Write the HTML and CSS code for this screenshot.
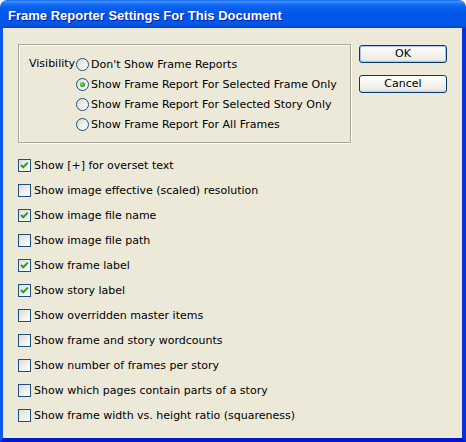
FILE: index.html
```html
<!DOCTYPE html>
<html>
<head>
<meta charset="utf-8">
<title>Frame Reporter Settings</title>
<link rel="stylesheet" href="styles.css">
</head>
<body>
<div class="window">
  <div class="titlebar"><span class="title">Frame Reporter Settings For This Document</span></div>
  <div class="client">
    <div class="top">
      <div class="group">
        <div class="vis-label">Visibility</div>
        <div class="radios">
          <div class="radio"><span class="rb"></span><span>Don't Show Frame Reports</span></div>
          <div class="radio"><span class="rb on"><span class="dot"></span></span><span>Show Frame Report For Selected Frame Only</span></div>
          <div class="radio"><span class="rb"></span><span>Show Frame Report For Selected Story Only</span></div>
          <div class="radio"><span class="rb"></span><span>Show Frame Report For All Frames</span></div>
        </div>
      </div>
      <div class="buttons">
        <div class="btn default">OK</div>
        <div class="btn">Cancel</div>
      </div>
    </div>
    <div class="checks">
      <div class="check"><span class="cb"><svg width="11" height="11" viewBox="0 0 11 11"><polyline points="2,5 4.2,7.3 8.8,2.6" fill="none" stroke="#21A121" stroke-width="2"/></svg></span><span>Show [+] for overset text</span></div>
      <div class="check"><span class="cb"></span><span>Show image effective (scaled) resolution</span></div>
      <div class="check"><span class="cb"><svg width="11" height="11" viewBox="0 0 11 11"><polyline points="2,5 4.2,7.3 8.8,2.6" fill="none" stroke="#21A121" stroke-width="2"/></svg></span><span>Show image file name</span></div>
      <div class="check"><span class="cb"></span><span>Show image file path</span></div>
      <div class="check"><span class="cb"><svg width="11" height="11" viewBox="0 0 11 11"><polyline points="2,5 4.2,7.3 8.8,2.6" fill="none" stroke="#21A121" stroke-width="2"/></svg></span><span>Show frame label</span></div>
      <div class="check"><span class="cb"><svg width="11" height="11" viewBox="0 0 11 11"><polyline points="2,5 4.2,7.3 8.8,2.6" fill="none" stroke="#21A121" stroke-width="2"/></svg></span><span>Show story label</span></div>
      <div class="check"><span class="cb"></span><span>Show overridden master items</span></div>
      <div class="check"><span class="cb"></span><span>Show frame and story wordcounts</span></div>
      <div class="check"><span class="cb"></span><span>Show number of frames per story</span></div>
      <div class="check"><span class="cb"></span><span>Show which pages contain parts of a story</span></div>
      <div class="check"><span class="cb"></span><span>Show frame width vs. height ratio (squareness)</span></div>
    </div>
  </div>
</div>
</body>
</html>
```

FILE: styles.css
```css
html, body {
  margin: 0;
  padding: 0;
  background: #ffffff;
}

.window {
  width: 466px;
  height: 442px;
  display: flex;
  flex-direction: column;
  font-family: "DejaVu Sans", Tahoma, sans-serif;
  font-size: 11px;
  color: #000;
}

.titlebar {
  height: 28px;
  flex: none;
  border-radius: 7px 7px 0 0;
  background: linear-gradient(180deg, #0A5FE6 0%, #3D95FF 5%, #2A7DF8 10%, #0A62EE 22%, #0056E6 50%, #0058EC 78%, #0A54E0 90%, #0043C6 100%);
  display: flex;
  align-items: center;
  padding-left: 8px;
  box-sizing: border-box;
}

.title {
  font-family: "Liberation Sans", Arial, sans-serif;
  font-weight: bold;
  font-size: 13px;
  color: #ffffff;
  text-shadow: 1px 1px 0 #0A1E9C;
  margin-top: 2px;
}

.client {
  flex: 1;
  background: #ECE9D8;
  border-left: 3px solid #0A58EC;
  border-right: 4px solid #0831D9;
  border-bottom: 4px solid #0019CF;
  display: flex;
  flex-direction: column;
  padding: 16px 0 0 15px;
}

.top {
  display: flex;
  align-items: flex-start;
}

.group {
  width: 321px;
  height: 88px;
  border: 1px solid #ACA899;
  box-shadow: 1px 1px 0 #ffffff, inset 1px 1px 0 #ffffff;
  display: flex;
  align-items: flex-start;
  padding: 9px 0 0 10px;
  box-sizing: content-box;
}

.vis-label {
  width: 47px;
  height: 20px;
  line-height: 20px;
}

.radios {
  display: flex;
  flex-direction: column;
}

.radio {
  height: 20px;
  display: flex;
  align-items: center;
  gap: 2px;
}

.rb {
  width: 11px;
  height: 11px;
  border: 1px solid #1C5180;
  border-radius: 50%;
  background: linear-gradient(135deg, #DCD8C7 0%, #F4F3EE 60%, #FFFFFF 100%);
  display: flex;
  align-items: center;
  justify-content: center;
  flex: none;
}

.dot {
  width: 5px;
  height: 5px;
  border-radius: 50%;
  background: radial-gradient(circle at 40% 35%, #6CE06C 0%, #21A121 70%, #1A8A1A 100%);
}

.buttons {
  display: flex;
  flex-direction: column;
  gap: 12px;
  margin-left: 8px;
  margin-top: 1px;
}

.btn {
  width: 86px;
  height: 16px;
  border: 1px solid #003C74;
  border-radius: 3px;
  background: linear-gradient(180deg, #FFFFFF 0%, #F6F5F0 40%, #ECEBE6 85%, #D6D0C5 100%);
  text-align: center;
  line-height: 16px;
}

.btn.default {
  box-shadow: inset 0 0 0 1px #A9C4F0;
}

.checks {
  display: flex;
  flex-direction: column;
  margin-top: 10px;
}

.check {
  height: 25px;
  display: flex;
  align-items: center;
  gap: 3px;
}

.cb {
  width: 11px;
  height: 11px;
  border: 1px solid #1C5180;
  background: linear-gradient(135deg, #DCDCD7 0%, #F2F2EE 60%, #FFFFFF 100%);
  display: flex;
  align-items: center;
  justify-content: center;
  flex: none;
}

.cb svg {
  display: block;
}
```
